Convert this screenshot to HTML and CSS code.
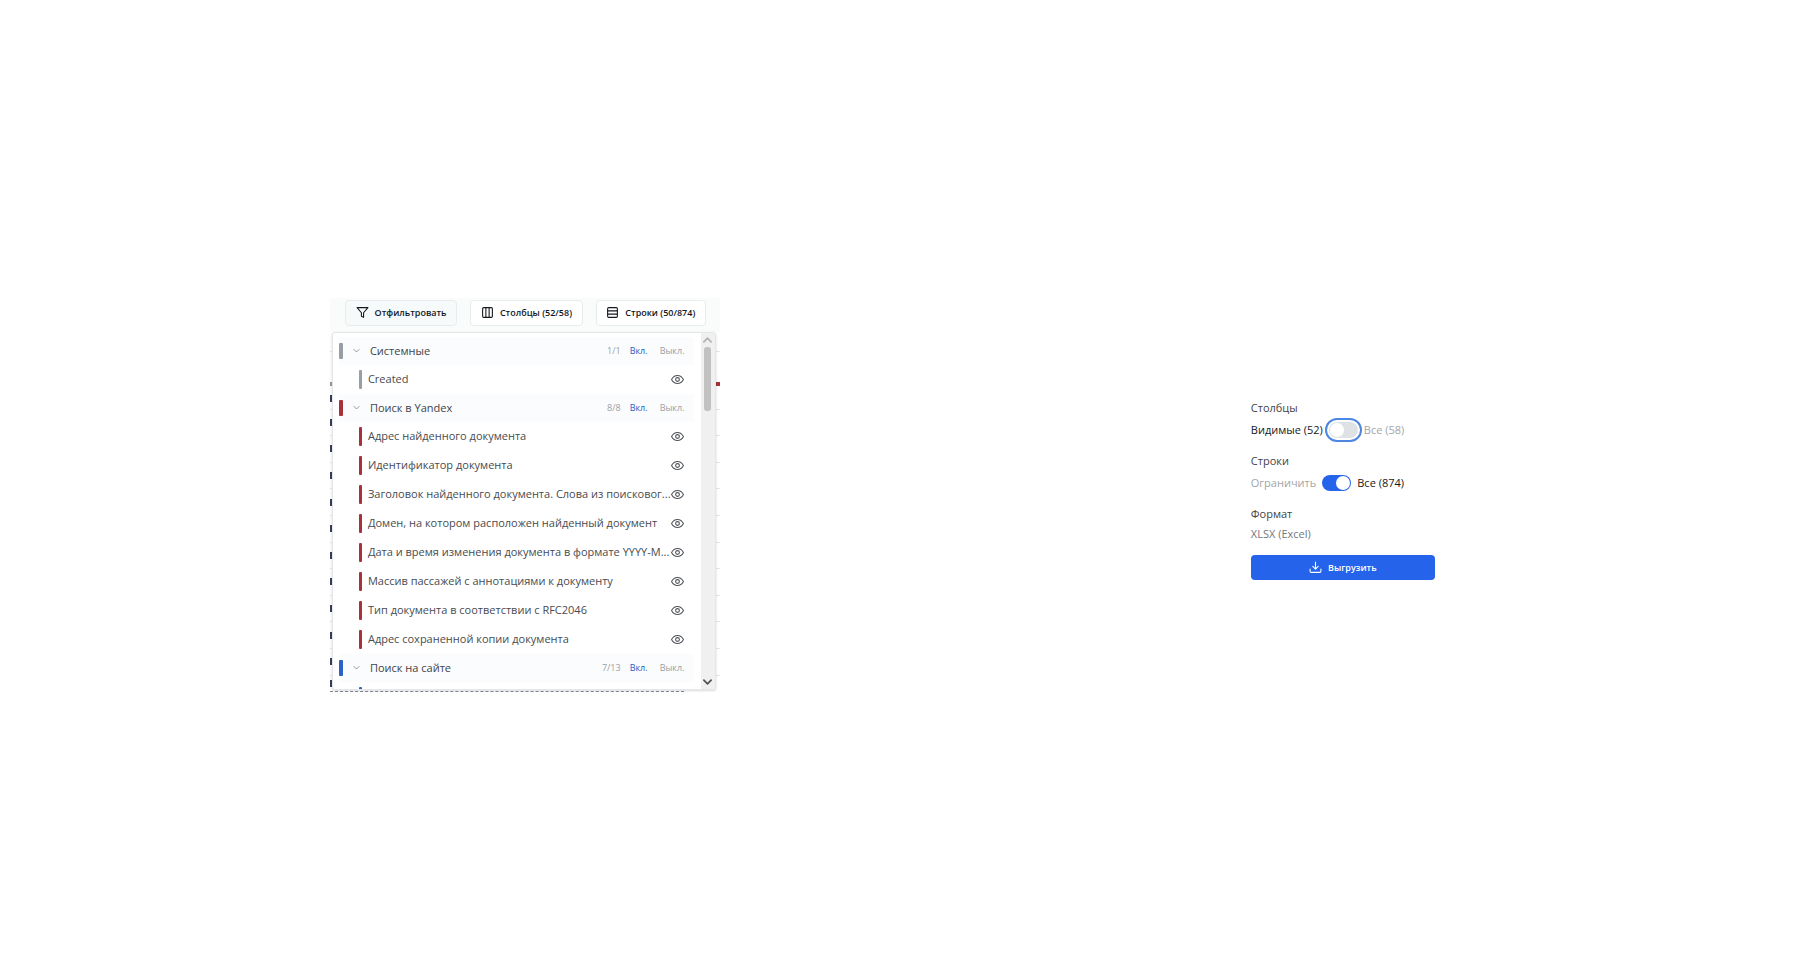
FILE: index.html
```html
<!DOCTYPE html>
<html lang="ru">
<head>
    <meta charset="UTF-8">
    <meta name="viewport" content="width=device-width, initial-scale=1.0">
    <title>Выгрузка</title>
    <link rel="stylesheet" href="styles.css">
</head>
<body>
    <!-- Shared icons -->
    <svg class="sprite" aria-hidden="true">
        <symbol id="eye" viewBox="0 0 24 24">
            <path d="M1 12s4-7.500 11-7.500S23 12 23 12s-4 7.500-11 7.500S1 12 1 12z"/>
            <circle cx="12" cy="12" r="3.500"/>
        </symbol>
        <symbol id="chevron" viewBox="0 0 24 24">
            <path d="M5 9l7 7 7-7"/>
        </symbol>
    </svg>

    <main class="page">
        <section class="columns">
            <div class="toolbar">
                <button class="tool active" type="button">
                    <svg class="icon" viewBox="0 0 24 24"><path d="M22 3H2l8 9.500V19l4 2v-8.500z"/></svg>
                    Отфильтровать
                </button>
                <button class="tool" type="button">
                    <svg class="icon" viewBox="0 0 24 24"><rect x="3" y="3" width="18" height="18" rx="2"/><path d="M9 3v18M15 3v18"/></svg>
                    Столбцы (52/58)
                </button>
                <button class="tool" type="button">
                    <svg class="icon" viewBox="0 0 24 24"><rect x="3" y="3" width="18" height="18" rx="2"/><path d="M3 9h18M3 15h18"/></svg>
                    Строки (50/874)
                </button>
            </div>

            <!-- Table rows left under the menu -->
            <div class="sheet">
                <div class="line"></div>
                <div class="line flagged"></div>
                <div class="line filled"></div>
                <div class="line filled"></div>
                <div class="line filled"></div>
                <div class="line filled"></div>
                <div class="line filled"></div>
                <div class="line filled"></div>
                <div class="line filled"></div>
                <div class="line filled"></div>
                <div class="line filled"></div>
                <div class="line filled"></div>
                <div class="line filled"></div>
                <div class="line filled last"></div>
            </div>

            <div class="menu">
                <div class="menu-list">
                    <div class="group gray">
                        <div class="group-head">
                            <span class="bar"></span>
                            <svg class="chevron"><use href="#chevron"/></svg>
                            <h2>Системные</h2>
                            <span class="count">1/1</span>
                            <button class="on" type="button">Вкл.</button>
                            <button class="off" type="button">Выкл.</button>
                        </div>
                        <ul>
                            <li><span>Created</span><button type="button" aria-label="Created"><svg class="eye"><use href="#eye"/></svg></button></li>
                        </ul>
                    </div>
                    <div class="group red">
                        <div class="group-head">
                            <span class="bar"></span>
                            <svg class="chevron"><use href="#chevron"/></svg>
                            <h2>Поиск в Yandex</h2>
                            <span class="count">8/8</span>
                            <button class="on" type="button">Вкл.</button>
                            <button class="off" type="button">Выкл.</button>
                        </div>
                        <ul>
                            <li><span>Адрес найденного документа</span><button type="button" aria-label="Адрес"><svg class="eye"><use href="#eye"/></svg></button></li>
                            <li><span>Идентификатор документа</span><button type="button" aria-label="Идентификатор"><svg class="eye"><use href="#eye"/></svg></button></li>
                            <li><span>Заголовок найденного документа. Слова из поисковог...</span><button type="button" aria-label="Заголовок"><svg class="eye"><use href="#eye"/></svg></button></li>
                            <li><span>Домен, на котором расположен найденный документ</span><button type="button" aria-label="Домен"><svg class="eye"><use href="#eye"/></svg></button></li>
                            <li><span>Дата и время изменения документа в формате YYYY-M...</span><button type="button" aria-label="Дата"><svg class="eye"><use href="#eye"/></svg></button></li>
                            <li><span>Массив пассажей с аннотациями к документу</span><button type="button" aria-label="Пассажи"><svg class="eye"><use href="#eye"/></svg></button></li>
                            <li><span>Тип документа в соответствии с RFC2046</span><button type="button" aria-label="Тип"><svg class="eye"><use href="#eye"/></svg></button></li>
                            <li><span>Адрес сохраненной копии документа</span><button type="button" aria-label="Копия"><svg class="eye"><use href="#eye"/></svg></button></li>
                        </ul>
                    </div>
                    <div class="group blue">
                        <div class="group-head">
                            <span class="bar"></span>
                            <svg class="chevron"><use href="#chevron"/></svg>
                            <h2>Поиск на сайте</h2>
                            <span class="count">7/13</span>
                            <button class="on" type="button">Вкл.</button>
                            <button class="off" type="button">Выкл.</button>
                        </div>
                        <ul>
                            <li></li>
                        </ul>
                    </div>
                </div>
                <div class="scrollbar">
                    <svg class="arrow up" viewBox="0 0 10 8"><path d="M1 6l4-4 4 4"/></svg>
                    <div class="thumb"></div>
                    <svg class="arrow down" viewBox="0 0 10 8"><path d="M1 2l4 4 4-4"/></svg>
                </div>
            </div>
        </section>

        <form class="export">
            <fieldset>
                <legend>Столбцы</legend>
                <label class="choice focused">
                    <span class="picked">Видимые (52)</span>
                    <input class="switch" type="checkbox" role="switch">
                    <span>Все (58)</span>
                </label>
            </fieldset>
            <fieldset>
                <legend>Строки</legend>
                <label class="choice">
                    <span>Ограничить</span>
                    <input class="switch" type="checkbox" role="switch" checked>
                    <span class="picked">Все (874)</span>
                </label>
            </fieldset>
            <fieldset>
                <legend>Формат</legend>
                <p class="format">XLSX (Excel)</p>
            </fieldset>
            <button class="download" type="button">
                <svg class="icon" viewBox="0 0 24 24"><path d="M2 15v4a2 2 0 0 0 2 2h16a2 2 0 0 0 2-2v-4M7 10l5 5 5-5M12 15V2"/></svg>
                Выгрузить
            </button>
        </form>
    </main>
</body>
</html>
```

FILE: styles.css
```css
* {
    box-sizing: border-box;
}
body {
    margin: 0;
    background-color: #fff;
    color: #3f4347;
    font-family: "Open Sans", "Noto Sans", sans-serif;
    font-size: 11px;
    line-height: 16px;
}
h2, p, ul, fieldset, legend {
    margin: 0;
    padding: 0;
    border: 0;
    font-size: 11px;
}
ul {
    list-style: none;
}
button {
    padding: 0;
    border: none;
    background: none;
    font-family: inherit;
    cursor: pointer;
}
svg {
    fill: none;
    stroke: currentColor;
    stroke-width: 2;
    stroke-linecap: round;
    stroke-linejoin: round;
    flex-shrink: 0;
}
.sprite {
    display: none;
}
.page {
    display: flex;
    justify-content: space-between;
    align-items: center;
    min-height: 100vh;
    padding: 22px 20.2% 0 18.35%;
}

/* Column menu */
.columns {
    position: relative;
    width: 390px;
    overflow: hidden;
}
.toolbar {
    display: flex;
    gap: 13px;
    height: 34px;
    padding: 2px 14px 6px 15px;
    background-color: #fafcfc;
}
.tool {
    display: flex;
    flex: 1 0 auto;
    align-items: center;
    justify-content: center;
    gap: 6px;
    height: 26px;
    padding: 0 8px;
    border: 1px solid #e8ecee;
    border-radius: 4px;
    background-color: #fff;
    color: #14181f;
    font-size: 9px;
    font-weight: 600;
    white-space: nowrap;
}
.tool.active {
    background-color: #f7fafb;
}
.icon {
    width: 13px;
    height: 13px;
}
.sheet {
    display: grid;
    grid-template-rows: 20px 36px 22px repeat(10, 1fr) 16px;
    height: 360px;
}
.line {
    display: flex;
    align-items: center;
    justify-content: space-between;
    border-bottom: 1px solid #e4e6e8;
}
.line.filled::before,
.line.flagged::before {
    content: "";
    width: 2px;
    height: 7px;
    background-color: #3c3e58;
}
.line.flagged {
    align-items: flex-end;
    padding-bottom: 2px;
    border-bottom: none;
}
.line.flagged::before {
    height: 4px;
    background-color: #9a9a9c;
}
.line.flagged::after {
    content: "";
    width: 4px;
    height: 4px;
    background-color: #a33238;
}
.line.last {
    margin-right: 36px;
    border-bottom: 1px dashed #85889a;
}
.menu {
    position: absolute;
    top: 34px;
    left: 2px;
    right: 4px;
    bottom: 2px;
    display: flex;
    overflow: hidden;
    border: 1px solid #e4e7ea;
    border-radius: 3px;
    background-color: #fff;
    box-shadow: 0 1px 3px rgba(0, 0, 0, 0.15);
}
.menu-list {
    flex: 1;
    padding: 4px 7px 0 6px;
}
.group-head {
    display: flex;
    align-items: center;
    height: 28px;
    padding-right: 9px;
    background-color: #fafcfd;
}
.bar {
    width: 4px;
    height: 16px;
    border-radius: 1px;
    background-color: currentColor;
}
.chevron {
    width: 9px;
    height: 9px;
    margin: 0 9px;
    color: #777c82;
}
.group-head h2 {
    flex: 1;
    color: #3f4347;
    font-weight: 500;
}
.count, .on, .off {
    color: #9a9fa5;
    font-size: 9px;
}
.on {
    margin: 0 12px 0 9px;
    color: #2860c4;
}
.gray {
    color: #989ea5;
}
.red {
    color: #a8323a;
}
.blue {
    color: #2b62c8;
}
.group li {
    display: flex;
    align-items: center;
    justify-content: space-between;
    height: 29px;
    padding: 0 10px 0 20px;
}
.group li::before {
    content: "";
    width: 3px;
    height: 19px;
    margin-right: 6px;
    border-radius: 1px;
    background-color: currentColor;
}
.group li:empty {
    justify-content: flex-start;
}
.group li span {
    flex: 1;
    color: #484c50;
    white-space: nowrap;
}
.group li button {
    display: flex;
    color: #505459;
}
.eye {
    width: 13px;
    height: 13px;
}
.scrollbar {
    display: flex;
    flex-direction: column;
    align-items: center;
    width: 15px;
    padding: 3px 0;
    background-color: #f0f0f0;
}
.thumb {
    width: 7px;
    height: 64px;
    margin-top: 3px;
    border-radius: 3px;
    background-color: #c1c1c1;
}
.arrow {
    width: 9px;
    height: 8px;
    color: #b4b4b4;
}
.arrow.down {
    margin-top: auto;
    color: #555;
}

/* Export settings */
.export {
    width: 184px;
    margin-bottom: 10px;
}
.export fieldset {
    margin-bottom: 13px;
}
.export legend {
    margin-bottom: 4px;
    font-weight: 500;
}
.choice {
    display: flex;
    align-items: center;
    gap: 6px;
    height: 20px;
    color: #a2a5a9;
    white-space: nowrap;
}
.picked {
    color: #17191c;
    font-weight: 500;
}
.switch {
    display: flex;
    align-items: center;
    width: 29px;
    height: 16px;
    margin: 0;
    padding: 1px;
    border-radius: 8px;
    background-color: #dfe2e5;
    appearance: none;
}
.switch::before {
    content: "";
    width: 14px;
    height: 14px;
    border-radius: 50%;
    background-color: #fff;
}
.switch:checked {
    justify-content: flex-end;
    background-color: #2563eb;
}
.focused .switch {
    outline: 2px solid #4c86e0;
    outline-offset: 2px;
}
.format {
    color: #74787c;
}
.download {
    display: flex;
    align-items: center;
    justify-content: center;
    gap: 6px;
    width: 100%;
    height: 25px;
    border-radius: 4px;
    background-color: #2563eb;
    color: #fff;
    font-size: 9px;
    font-weight: 600;
}
```
